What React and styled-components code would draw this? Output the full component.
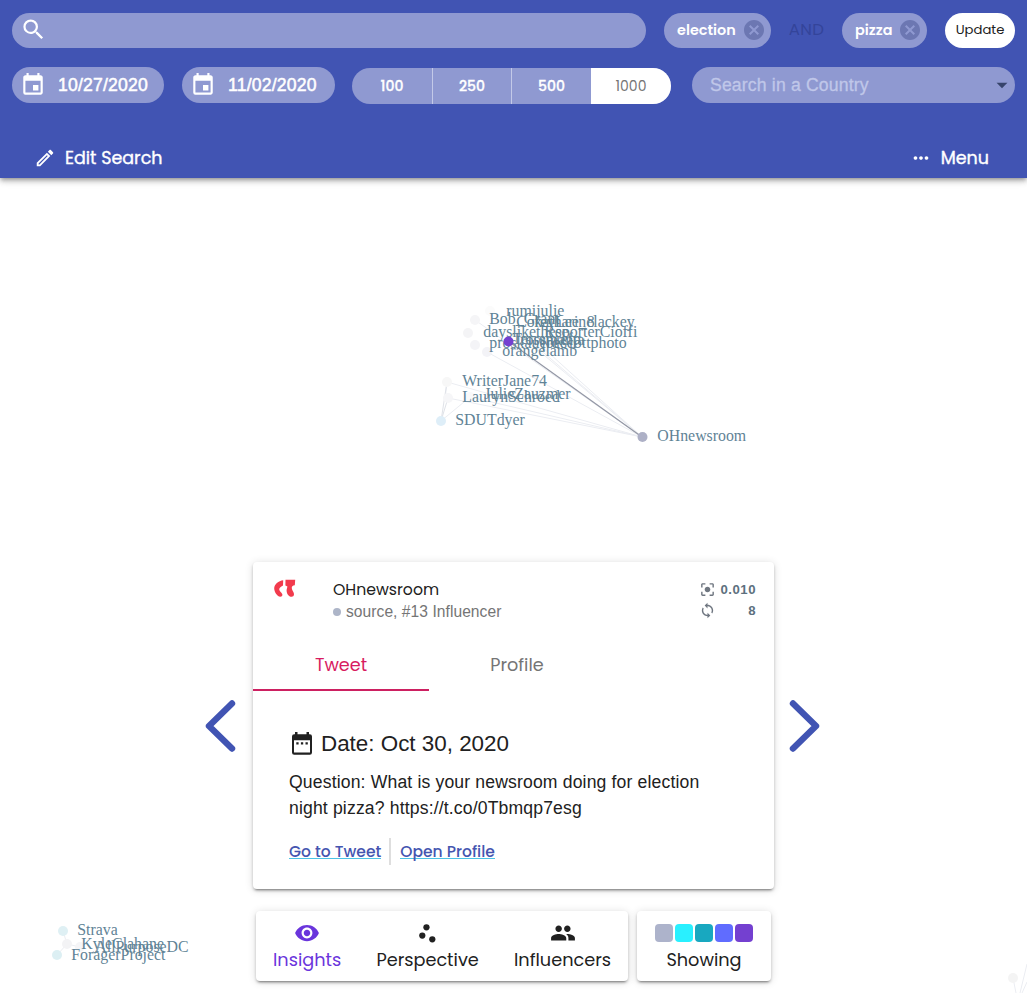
import React from "react";
import styled, { createGlobalStyle } from "styled-components";
import {
  MdSearch,
  MdEvent,
  MdOutlineEdit,
  MdMoreHoriz,
  MdCancel,
  MdArrowDropDown,
  MdCenterFocusStrong,
  MdLoop,
  MdVisibility,
  MdScatterPlot,
  MdPeople,
} from "react-icons/md";

const GlobalStyle = createGlobalStyle`
  * { box-sizing: border-box; }
  body { margin: 0; background: #fff; overflow: hidden; }
  button { border: 0; background: none; padding: 0; margin: 0; font: inherit; color: inherit; }
`;

const display = `"Poppins", "Inter", sans-serif`;
const body = `"Liberation Sans", Arial, sans-serif`;
const serif = `"Liberation Serif", "Times New Roman", serif`;

const Page = styled.div`
  position: relative;
  display: flex;
  flex-direction: column;
  width: 1027px;
  height: 993px;
  overflow: hidden;
  background: #fff;
  color: #212121;
  font-family: ${body};
`;

const Header = styled.header`
  position: relative;
  height: 178px;
  flex: none;
  padding: 13px 12px 0;
  background: #4154b3;
  color: #fff;
  box-shadow: 0 2px 4px -1px rgba(0, 0, 0, 0.3), 0 4px 5px 0 rgba(0, 0, 0, 0.14),
    0 1px 10px 0 rgba(0, 0, 0, 0.12);
`;

const TopRow = styled.div`
  display: flex;
  height: 35px;
`;

const SearchBox = styled.div`
  display: flex;
  align-items: center;
  width: 634px;
  margin-right: 18px;
  padding: 0 0 2px 8px;
  border-radius: 18px;
  background: #8f99d1;
`;

const Chip = styled.div`
  display: flex;
  align-items: center;
  justify-content: space-between;
  width: ${(p) => p.$width}px;
  padding: 0 5px 1px 13px;
  border-radius: 18px;
  background: #8f99d1;
  font: 600 14.4px/32px ${display};
  svg { color: #6c77b2; }
`;

const Operator = styled.span`
  width: 71px;
  text-align: center;
  font: 400 16.6px/34px ${display};
  letter-spacing: 0.3px;
  color: #34449a;
`;

const UpdateButton = styled.button`
  width: 70px;
  margin-left: 18px;
  padding-bottom: 2px;
  border-radius: 18px;
  background: #fff;
  color: #212121;
  font: 400 13.2px/32px ${display};
`;

const FilterRow = styled.div`
  display: flex;
  height: 36px;
  margin-top: 19px;
`;

const DateField = styled.div`
  display: flex;
  align-items: center;
  width: ${(p) => p.$width}px;
  margin-right: ${(p) => p.$gap}px;
  padding-left: 8px;
  border-radius: 18px;
  background: #8f99d1;
  font: 400 17.6px/36px ${body};
  letter-spacing: 0.2px;
  -webkit-text-stroke: 0.5px #fff;
  svg { margin-right: 12px; stroke: none; }
`;

const LimitGroup = styled.div`
  display: grid;
  grid-template-columns: 80px 79px 80px 80px;
  width: 319px;
  height: 36px;
  margin: 1px 21px 0 0;
  border-radius: 18px;
  overflow: hidden;
  background: #8f99d1;
`;

const LimitButton = styled.button`
  border-left: ${(p) => (p.$first || p.$active ? "0" : "1px solid #c3c9e8")};
  background: ${(p) => (p.$active ? "#fff" : "transparent")};
  color: ${(p) => (p.$active ? "#757575" : "#fff")};
  font: ${(p) => (p.$active ? 400 : 500)} 14px/36px ${display};
  -webkit-text-stroke: ${(p) => (p.$active ? 0 : 0.3)}px currentColor;
`;

const CountrySelect = styled.div`
  display: flex;
  align-items: center;
  justify-content: space-between;
  width: 323px;
  padding: 0 0 0 18px;
  border-radius: 18px;
  background: #8f99d1;
  color: #c0c7e9;
  font: 400 17.6px/36px ${body};
  letter-spacing: 0.17px;
  -webkit-text-stroke: 0.3px #c0c7e9;
  svg { color: #37446b; stroke: none; }
`;

const ActionRow = styled.div`
  display: flex;
  justify-content: space-between;
  margin-top: 40px;
  padding: 0 26px 0 22px;
`;

const HeaderAction = styled.button`
  display: flex;
  align-items: center;
  font: 400 17.5px/30px ${display};
  -webkit-text-stroke: 0.35px #fff;
  svg { margin-right: 9px; stroke: none; }
`;

const Graph = styled.svg`
  position: absolute;
  left: 0;
  top: 0;
  text { font: 15.85px ${serif}; fill: #5f8396; }
`;

const Stage = styled.main`
  position: relative;
  display: flex;
  justify-content: center;
  align-items: center;
  height: 327px;
  margin-top: 384px;
`;

const Arrow = styled.button`
  width: 32px;
  height: 54px;
  svg { display: block; overflow: visible; }
`;

const Card = styled.section`
  width: 521px;
  height: 327px;
  margin: 0 16px;
  border-radius: 4px;
  background: #fff;
  box-shadow: 0 3px 2px -2px rgba(0, 0, 0, 0.3), 0 2px 3px 0 rgba(0, 0, 0, 0.2),
    0 1px 8px 0 rgba(0, 0, 0, 0.14);
`;

const CardHead = styled.div`
  display: flex;
  height: 81px;
  padding: 17px 18px 0 21px;
`;

const Identity = styled.div`
  flex: 1;
  margin-left: 37px;
`;

const Name = styled.div`
  font: 400 15.7px/22px ${display};
`;

const Role = styled.div`
  display: flex;
  align-items: center;
  font: 400 15.6px/22px ${body};
  letter-spacing: 0.05px;
  color: #757575;
`;

const Dot = styled.span`
  width: 8px;
  height: 8px;
  margin: 0 5px 0 0;
  border-radius: 50%;
  background: #adb5c8;
`;

const Stats = styled.div`
  width: 57px;
`;

const Stat = styled.div`
  display: flex;
  align-items: center;
  justify-content: space-between;
  height: 21px;
  font: 700 13.2px/21px ${body};
  letter-spacing: 0.5px;
  color: #5d707e;
  svg { color: #6f7680; }
`;

const Tabs = styled.div`
  display: flex;
  height: 48px;
`;

const Tab = styled.button`
  width: 176px;
  padding-bottom: 2px;
  border-bottom: 2px solid ${(p) => (p.$active ? "#cd2061" : "transparent")};
  color: ${(p) => (p.$active ? "#d81b60" : "#757575")};
  font: 400 17.6px/42px ${display};
`;

const Panel = styled.div`
  padding: 40px 36px 0;
`;

const DateLine = styled.div`
  display: flex;
  align-items: center;
  height: 26px;
  font: 400 22.4px/26px ${body};
  svg { margin: 0 9px 1px 3px; }
`;

const Tweet = styled.p`
  margin: 12px 0 0;
  width: 430px;
  font: 400 17.6px/26px ${body};
  letter-spacing: 0.15px;
`;

const Links = styled.div`
  display: flex;
  height: 27px;
  margin-top: 17px;
`;

const TextLink = styled.a`
  height: 21px;
  border-bottom: 1px solid #4cc3e6;
  color: #4555b0;
  font: 500 15.55px/27px ${display};
`;

const LinkDivider = styled.span`
  width: 2px;
  margin: 0 9px 0 8px;
  background: #dedede;
`;

const BottomBar = styled.nav`
  position: relative;
  display: flex;
  gap: 9px;
  margin: 22px 0 0 256px;
`;

const Dock = styled.div`
  display: flex;
  width: ${(p) => p.$width}px;
  height: 70px;
  padding: 0 ${(p) => p.$pad}px;
  justify-content: space-between;
  border-radius: 4px;
  background: #fff;
  box-shadow: 0 3px 2px -2px rgba(0, 0, 0, 0.3), 0 2px 3px 0 rgba(0, 0, 0, 0.2),
    0 1px 8px 0 rgba(0, 0, 0, 0.14);
`;

const DockItem = styled.button`
  display: flex;
  flex-direction: column;
  align-items: center;
  flex: ${(p) => (p.$fill ? 1 : "none")};
  padding-top: 9px;
  color: ${(p) => (p.$active ? "#6a35dc" : "#212121")};
  font: 400 17.7px/26px ${display};
`;

const IconSlot = styled.span`
  display: flex;
  align-items: center;
  gap: 2px;
  height: 27px;
  padding-bottom: 1px;
`;

const Swatch = styled.span`
  width: 18px;
  height: 18px;
  border-radius: 4px;
  background: ${(p) => p.$color};
`;

const LABELS = [
  ["rumijulie", 506, 316],
  ["Bob_Grant", 489, 324],
  ["CoreyLee_8", 516, 327],
  ["katharinelackey", 534, 327],
  ["dayslikethese", 483, 337],
  ["ReporterCioffi", 544, 337],
  ["Terrencefp", 512, 344],
  ["rossmanta", 520, 345],
  ["proskauerdc", 489, 348],
  ["joescottphoto", 541, 348],
  ["orangelamb", 502, 356],
  ["WriterJane74", 462, 386],
  ["JulieZauzmer", 484, 399],
  ["LaurynSchroed", 462, 402],
  ["SDUTdyer", 455, 425],
  ["OHnewsroom", 657, 441],
  ["Strava", 77, 935],
  ["KyleClahane", 81, 949],
  ["AllPurposeDC", 95, 952],
  ["ForagerProject", 71, 960],
];

const HUB = [642, 437];
const SPOKES = [
  [475, 320], [487, 352], [514, 330], [530, 341], [540, 345],
  [447, 382], [448, 398], [470, 397],
];

const FAINT_NODES = [
  [475, 320, "#f5f5f7"], [468, 333, "#f4f4f6"], [475, 345, "#f4f4f7"],
  [487, 352, "#f3f3f7"], [490, 311, "#fbfbfb"], [447, 382, "#f7f7f7"],
  [448, 398, "#f6f6f8"], [470, 397, "#f9f9fa"], [441, 421, "#deeef8"],
  [63, 931, "#dff0f4"], [57, 955, "#dceff3"], [67, 944, "#f3f3f5"],
  [80, 947, "#f5f5f7"], [1013, 978, "#f4f4f4"],
];

function Network() {
  return (
    <Graph width="1027" height="993" viewBox="0 0 1027 993">
      <g stroke="#ebedf2" strokeWidth="1" fill="none">
        {SPOKES.map(([x, y]) => (
          <line key={`${x}-${y}`} x1={x} y1={y} x2={HUB[0]} y2={HUB[1]} />
        ))}
        <path d="M441 421L470 397M447 382L445 400" />
        <path d="M447 382L441 421L448 398" stroke="#dfe2e8" />
        <path d="M63 931L67 944L57 955M67 944L80 947" />
        <path d="M1013 978L1016 993M1027 964L1020 993M1027 982L1022 993" />
      </g>
      <line x1="508" y1="341" x2="642" y2="437" stroke="#9397a5" strokeWidth="1.2" />
      {FAINT_NODES.map(([x, y, color]) => (
        <circle key={`${x}-${y}`} cx={x} cy={y} r="5" fill={color} />
      ))}
      {LABELS.map(([label, x, y]) => (
        <text key={label} x={x + 0.3} y={y}>{label}</text>
      ))}
      <circle cx="508.5" cy="341.5" r="5" fill="#7440d0" />
      <circle cx="642.5" cy="437" r="5" fill="#adb0c6" />
    </Graph>
  );
}

function QuoteMark() {
  return (
    <svg width="22" height="19" viewBox="0 0 22 19" fill="#f23b4d">
      <path d="M9.200 1.200C4.500 1.600 .2 5.500 .2 9.500C.2 13 3.500 17.800 6.200 17.800C7.800 17.800 8.900 16.500 8.200 15C7.500 13.600 5.200 12 5.200 10.300C5.200 9.300 6.500 7.800 9 6.400Z" />
      <path d="M11.500 .8H21.200L20.800 6.300C18.500 6.600 17.600 7.600 17.800 9.300C18 11.600 20.300 13.500 20 15.600C19.800 17 18.900 17.800 17.600 17.800C14.600 17.800 12.400 14.600 12.600 11L13.400 7.600L11.400 6.600Z" />
    </svg>
  );
}

function CalendarDots() {
  return (
    <svg width="20" height="23" viewBox="0 0 20 23">
      <path d="M3 0h2.500v2.300h9V0H17v2.300h.8A2.200 2.200 0 0 1 20 4.500v16a2.200 2.200 0 0 1-2.200 2.200H2.200A2.200 2.200 0 0 1 0 20.500v-16a2.200 2.200 0 0 1 2.200-2.200H3zM2 8.200v12.300h16V8.200zM4.300 10.200h2.300v2.300H4.300zM8.900 10.200h2.300v2.300H8.900zM13.500 10.200h2.300v2.300h-2.300z" fill="#212121" fillRule="evenodd" />
    </svg>
  );
}

function Chevron({ points }) {
  return (
    <svg width="32" height="54" viewBox="0 0 32 54">
      <polyline points={points} fill="none" stroke="#4154b3" strokeWidth="6.400" strokeLinecap="round" strokeLinejoin="round" />
    </svg>
  );
}

const SWATCHES = ["#adb3cb", "#29f0ff", "#18a8c0", "#606cff", "#7440d0"];

export default function App() {
  return (
    <Page>
      <GlobalStyle />
      <Network />
      <Header>
        <TopRow>
          <SearchBox><MdSearch size={27} /></SearchBox>
          <Chip $width={107}>election<MdCancel size={24} /></Chip>
          <Operator>AND</Operator>
          <Chip $width={85}>pizza<MdCancel size={24} /></Chip>
          <UpdateButton>Update</UpdateButton>
        </TopRow>
        <FilterRow>
          <DateField $width={152} $gap={18}><MdEvent size={26} />10/27/2020</DateField>
          <DateField $width={153} $gap={17}><MdEvent size={26} />11/02/2020</DateField>
          <LimitGroup>
            <LimitButton $first>100</LimitButton>
            <LimitButton>250</LimitButton>
            <LimitButton>500</LimitButton>
            <LimitButton $active>1000</LimitButton>
          </LimitGroup>
          <CountrySelect>Search in a Country<MdArrowDropDown size={26} /></CountrySelect>
        </FilterRow>
        <ActionRow>
          <HeaderAction><MdOutlineEdit size={22} />Edit Search</HeaderAction>
          <HeaderAction><MdMoreHoriz size={22} />Menu</HeaderAction>
        </ActionRow>
      </Header>
      <Stage>
        <Arrow aria-label="Previous"><Chevron points="27,4.500 4,27 27,49.500" /></Arrow>
        <Card>
          <CardHead>
            <QuoteMark />
            <Identity>
              <Name>OHnewsroom</Name>
              <Role><Dot />source, #13 Influencer</Role>
            </Identity>
            <Stats>
              <Stat><MdCenterFocusStrong size={17} />0.010</Stat>
              <Stat><MdLoop size={17} />8</Stat>
            </Stats>
          </CardHead>
          <Tabs>
            <Tab $active>Tweet</Tab>
            <Tab>Profile</Tab>
          </Tabs>
          <Panel>
            <DateLine><CalendarDots />Date: Oct 30, 2020</DateLine>
            <Tweet>Question: What is your newsroom doing for election night pizza? https://t.co/0Tbmqp7esg</Tweet>
            <Links>
              <TextLink>Go to Tweet</TextLink>
              <LinkDivider />
              <TextLink>Open Profile</TextLink>
            </Links>
          </Panel>
        </Card>
        <Arrow aria-label="Next"><Chevron points="3,4.500 26,27 3,49.500" /></Arrow>
      </Stage>
      <BottomBar>
        <Dock $width={372} $pad={17}>
          <DockItem $active><IconSlot><MdVisibility size={26} /></IconSlot>Insights</DockItem>
          <DockItem><IconSlot><MdScatterPlot size={25} /></IconSlot>Perspective</DockItem>
          <DockItem><IconSlot><MdPeople size={26} /></IconSlot>Influencers</DockItem>
        </Dock>
        <Dock $width={134} $pad={0}>
          <DockItem $fill>
            <IconSlot>{SWATCHES.map((c) => <Swatch key={c} $color={c} />)}</IconSlot>
            Showing
          </DockItem>
        </Dock>
      </BottomBar>
    </Page>
  );
}
